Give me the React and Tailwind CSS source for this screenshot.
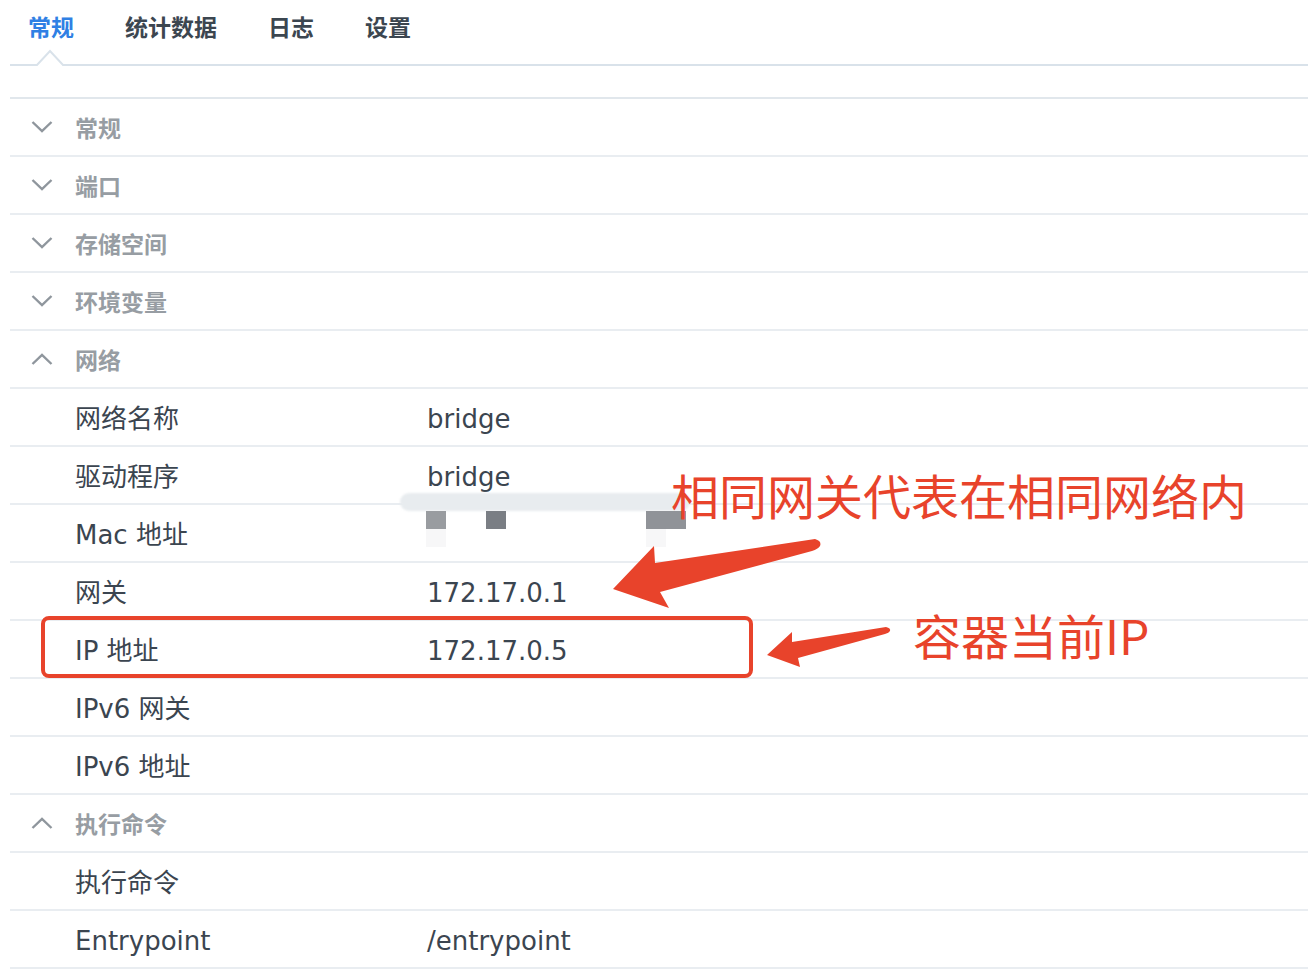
import React from 'react'

const tabs = ['常规', '统计数据', '日志', '设置']

const rows = [
  { type: 'section', label: '常规', open: false },
  { type: 'section', label: '端口', open: false },
  { type: 'section', label: '存储空间', open: false },
  { type: 'section', label: '环境变量', open: false },
  { type: 'section', label: '网络', open: true },
  { type: 'item', label: '网络名称', value: 'bridge' },
  { type: 'item', label: '驱动程序', value: 'bridge' },
  { type: 'item', label: 'Mac 地址', value: '', redacted: true },
  { type: 'item', label: '网关', value: '172.17.0.1' },
  { type: 'item', label: 'IP 地址', value: '172.17.0.5' },
  { type: 'item', label: 'IPv6 网关', value: '' },
  { type: 'item', label: 'IPv6 地址', value: '' },
  { type: 'section', label: '执行命令', open: true },
  { type: 'item', label: '执行命令', value: '' },
  { type: 'item', label: 'Entrypoint', value: '/entrypoint' },
]

const font = {
  fontFamily: '"DejaVu Sans", "Noto Sans CJK SC", sans-serif',
}
const cjk = { fontFamily: '"Noto Sans CJK SC", sans-serif' }

function Chevron({ open }) {
  return (
    <svg width="22" height="12" viewBox="0 0 22 12" className="shrink-0">
      <path
        d={open ? 'M1.5 11 L11 2 L20.5 11' : 'M1.5 1 L11 10 L20.5 1'}
        fill="none"
        stroke="#8f969d"
        strokeWidth="2.4"
      />
    </svg>
  )
}

function Row({ row }) {
  if (row.type === 'section') {
    return (
      <div className="flex h-[58px] items-center border-b-2 border-[#e9edf1] pl-[21px]">
        <Chevron open={row.open} />
        <span className="ml-[22px] text-[23px] font-bold text-[#979da3]" style={cjk}>
          {row.label}
        </span>
      </div>
    )
  }
  return (
    <div className="relative flex h-[58px] items-center border-b-2 border-[#e9edf1] pl-[65px] pt-[4px] text-[26px] text-[#3b4550]">
      <span className="w-[352px] shrink-0">{row.label}</span>
      <span>{row.value}</span>
      {row.redacted && (
        <div className="absolute left-[390px] top-[-12px] h-[64px] w-[300px]">
          <div className="absolute left-0 top-[0px] h-[18px] w-[290px] rounded-full bg-[#e8ecef] blur-[1px]" />
          <div className="absolute left-[26px] top-[18px] h-[18px] w-[20px] bg-[#999ca0]" />
          <div className="absolute left-[86px] top-[18px] h-[18px] w-[20px] bg-[#7a7e84]" />
          <div className="absolute left-[246px] top-[18px] h-[18px] w-[40px] bg-[#909398]" />
          <div className="absolute left-[26px] top-[36px] h-[18px] w-[20px] bg-[#f7f7f8]" />
          <div className="absolute left-[246px] top-[36px] h-[18px] w-[20px] bg-[#f7f7f8]" />
        </div>
      )}
    </div>
  )
}

export default function App() {
  return (
    <div className="relative h-[980px] w-[1308px] overflow-hidden bg-white" style={font}>
      <div className="ml-[10px]">
        <div className="relative flex h-[66px] items-start gap-[51px] border-b-2 border-[#d9e2ea] pl-[18px] pt-[11px]">
          {tabs.map((t, i) => (
            <span
              key={t}
              className={
                'text-[23px] font-bold leading-[30px] ' +
                (i === 0 ? 'text-[#2f80e4]' : 'text-[#3c4650]')
              }
              style={cjk}
            >
              {t}
            </span>
          ))}
          <svg
            width="30"
            height="18"
            viewBox="0 0 30 18"
            className="absolute bottom-[-2px] left-[25px]"
          >
            <path d="M0 16 L2 16 L15 2.5 L28 16 L30 16 L30 18 L0 18 Z" fill="#fff" />
            <path d="M0 17 L2 17 L15 3 L28 17 L30 17" fill="none" stroke="#d9e2ea" strokeWidth="2" />
          </svg>
        </div>
        <div className="h-[33px] border-b-2 border-[#e1e7ec]" />
        {rows.map((r, i) => (
          <Row key={i} row={r} />
        ))}
      </div>

      {/* annotations */}
      <div className="absolute left-[41px] top-[616px] h-[62px] w-[712px] rounded-[8px] border-[4px] border-[#e8432b]" />
      <svg width="1308" height="980" className="pointer-events-none absolute left-0 top-0">
        <path
          d="M613 589 L654 546 L655 563 L815 539 Q822 541 820 546 Q818 549 812 551 L660 592 L669 608 Z"
          fill="#e8432b"
        />
        <path
          d="M767 655 L792 632 L792 642 L886 627 Q891 628 890 631 Q889 633 885 634 L798 658 L800 667 Z"
          fill="#e8432b"
        />
      </svg>
      <div className="absolute left-[671px] top-[470px] text-[48px] leading-none text-[#e8432b]" style={cjk}>
        相同网关代表在相同网络内
      </div>
      <div className="absolute left-[913px] top-[610px] text-[48px] leading-none text-[#e8432b]" style={cjk}>
        容器当前IP
      </div>
    </div>
  )
}
